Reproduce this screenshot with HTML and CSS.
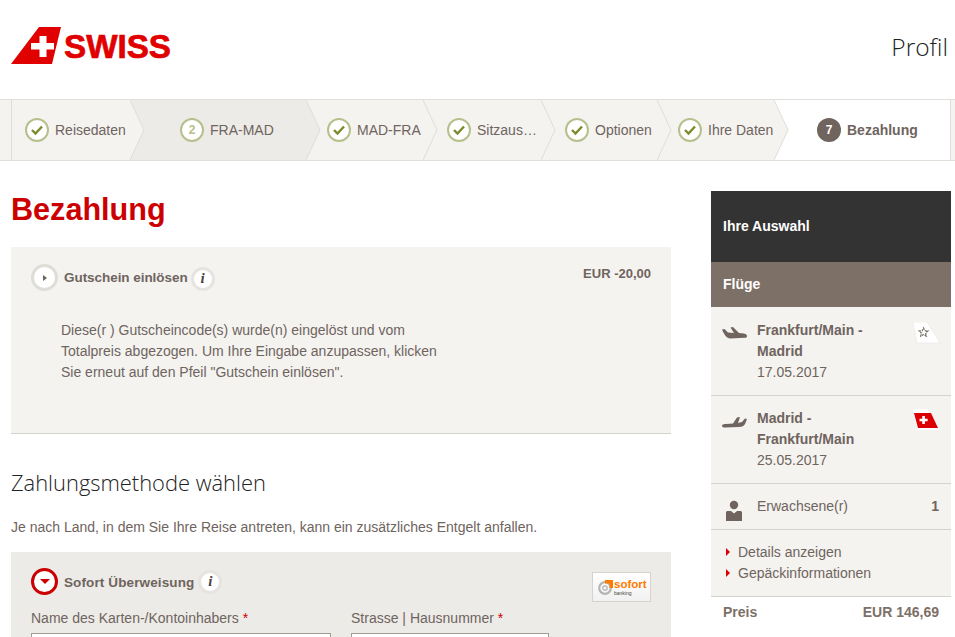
FILE: index.html
```html
<!DOCTYPE html>
<html lang="de">
<head>
<meta charset="utf-8">
<title>Bezahlung</title>
<link rel="stylesheet" href="styles.css">
</head>
<body>
<header class="top">
  <svg class="logo" width="162" height="38" viewBox="0 0 162 38">
    <polygon points="0,37 28,0 50,0 41,37" fill="#e00000"/>
    <path d="M28.500 9h7v7h7.500v6.500h-7.500v7.500h-7v-7.500h-8.500v-6.500h8.500z" fill="#fff"/>
    <text x="53" y="30.500" class="logo-text" textLength="107" lengthAdjust="spacingAndGlyphs">SWISS</text>
  </svg>
  <span class="profil">Profil</span>
</header>

<nav class="steps">
  <div class="step-lead"></div>
  <div class="step s1">
    <span class="dot done"><svg width="14" height="12" viewBox="0 0 14 12"><path d="M2 6l3.500 3.500L12 2.500" class="tick"/></svg></span>
    <span class="step-label">Reisedaten</span>
    <svg class="arrow" width="15" height="60" viewBox="0 0 15 60"><polygon points="0,0 14,30 0,60" class="a-light"/><polyline points="0,0 14,30 0,60" class="a-line"/></svg>
  </div>
  <div class="step s2 current-grey">
    <span class="dot num">2</span>
    <span class="step-label">FRA-MAD</span>
    <svg class="arrow" width="15" height="60" viewBox="0 0 15 60"><polygon points="0,0 14,30 0,60" class="a-grey"/><polyline points="0,0 14,30 0,60" class="a-line"/></svg>
  </div>
  <div class="step s3">
    <span class="dot done"><svg width="14" height="12" viewBox="0 0 14 12"><path d="M2 6l3.500 3.500L12 2.500" class="tick"/></svg></span>
    <span class="step-label">MAD-FRA</span>
    <svg class="arrow" width="15" height="60" viewBox="0 0 15 60"><polygon points="0,0 14,30 0,60" class="a-light"/><polyline points="0,0 14,30 0,60" class="a-line"/></svg>
  </div>
  <div class="step s4">
    <span class="dot done"><svg width="14" height="12" viewBox="0 0 14 12"><path d="M2 6l3.500 3.500L12 2.500" class="tick"/></svg></span>
    <span class="step-label">Sitzaus…</span>
    <svg class="arrow" width="15" height="60" viewBox="0 0 15 60"><polygon points="0,0 14,30 0,60" class="a-light"/><polyline points="0,0 14,30 0,60" class="a-line"/></svg>
  </div>
  <div class="step s5">
    <span class="dot done"><svg width="14" height="12" viewBox="0 0 14 12"><path d="M2 6l3.500 3.500L12 2.500" class="tick"/></svg></span>
    <span class="step-label">Optionen</span>
    <svg class="arrow" width="15" height="60" viewBox="0 0 15 60"><polygon points="0,0 14,30 0,60" class="a-light"/><polyline points="0,0 14,30 0,60" class="a-line"/></svg>
  </div>
  <div class="step s6">
    <span class="dot done"><svg width="14" height="12" viewBox="0 0 14 12"><path d="M2 6l3.500 3.500L12 2.500" class="tick"/></svg></span>
    <span class="step-label">Ihre Daten</span>
    <svg class="arrow" width="15" height="60" viewBox="0 0 15 60"><polygon points="0,0 14,30 0,60" class="a-light"/><polyline points="0,0 14,30 0,60" class="a-line"/></svg>
  </div>
  <div class="step s7 active">
    <span class="dot now">7</span>
    <span class="step-label">Bezahlung</span>
  </div>
  <div class="step-tail"></div>
</nav>

<div class="page">
  <main class="main">
    <h1 class="title">Bezahlung</h1>

    <section class="voucher">
      <div class="panel-head">
        <span class="toggle"><svg width="8" height="8" viewBox="0 0 8 8"><polygon points="2,1 6,4 2,7" fill="#6f645e"/></svg></span>
        <span class="panel-title">Gutschein einlösen</span>
        <span class="info">i</span>
        <span class="amount">EUR -20,00</span>
      </div>
      <p class="voucher-text">Diese(r ) Gutscheincode(s) wurde(n) eingelöst und vom<br>Totalpreis abgezogen. Um Ihre Eingabe anzupassen, klicken<br>Sie erneut auf den Pfeil "Gutschein einlösen".</p>
    </section>

    <h2 class="subtitle">Zahlungsmethode wählen</h2>
    <p class="note">Je nach Land, in dem Sie Ihre Reise antreten, kann ein zusätzliches Entgelt anfallen.</p>

    <section class="method">
      <div class="panel-head method-head">
        <span class="toggle open"><svg width="10" height="6" viewBox="0 0 10 6"><polygon points="0,0 10,0 5,5" fill="#cc0000"/></svg></span>
        <span class="panel-title">Sofort Überweisung</span>
        <span class="info info-flat">i</span>
        <span class="sofort">
          <svg width="16" height="16" viewBox="0 0 16 16" class="sofort-mark">
            <circle cx="7" cy="9" r="5.800" fill="none" stroke="#b5b5b5" stroke-width="2.200"/>
            <circle cx="7" cy="9" r="2.200" fill="none" stroke="#b5b5b5" stroke-width="1.300"/>
            <path d="M7 1h8v8h-3.500V4.500H7z" fill="#ff7a00"/>
          </svg>
          <span class="sofort-words"><span class="sofort-name">sofort</span><span class="sofort-sub">banking</span></span>
        </span>
      </div>
      <div class="fields">
        <div class="field f-name">
          <label class="field-label">Name des Karten-/Kontoinhabers <span class="req">*</span></label>
          <div class="input"></div>
        </div>
        <div class="field f-street">
          <label class="field-label">Strasse | Hausnummer <span class="req">*</span></label>
          <div class="input"></div>
        </div>
      </div>
    </section>
  </main>

  <aside class="side">
    <div class="side-head">Ihre Auswahl</div>
    <div class="side-sub">Flüge</div>
    <div class="flight">
      <svg class="plane" width="26" height="14" viewBox="0 0 26 14"><path d="M0 3.500L2.500 3l3.500 3.500 6 .4L8.500 1.500 11 1l6 6 5 .5C24 8 25 9 25 10c0 1-.5 1.800-2 1.800L8 12.500C5 12.500 2 8.500 0 3.500z" fill="#6f645e"/></svg>
      <div class="flight-text">
        <div class="route">Frankfurt/Main -<br>Madrid</div>
        <div class="date">17.05.2017</div>
      </div>
      <svg class="tail" width="28" height="22" viewBox="0 0 28 22">
        <polygon points="0,0 14,0 27,21 4,21" fill="#fff" stroke="#e4e2dd" stroke-width=".5"/>
        <path d="M10.500 6l1.300 2.700 3 .3-2.200 2 .7 3-2.800-1.500-2.700 1.500.6-3-2.200-2 3-.3z" fill="none" stroke="#77706a" stroke-width="1.300" stroke-dasharray="2 1"/>
      </svg>
    </div>
    <div class="flight flight-back">
      <svg class="plane" width="26" height="14" viewBox="0 0 26 14"><path d="M0 10.500C0 9.500 2 9 4 9l7-.5L15 2.500 18 2l-2 6 4-1 3-3.500 2 .5-2 5c-1 2-3 3-6 3l-14 .5C1 12.500 0 12 0 10.500z" fill="#6f645e"/></svg>
      <div class="flight-text">
        <div class="route">Madrid -<br>Frankfurt/Main</div>
        <div class="date">25.05.2017</div>
      </div>
      <svg class="tail" width="28" height="22" viewBox="0 0 28 22">
        <polygon points="0,0 14,0 27,21 4,21" fill="#fff"/>
        <polygon points="1,4 18,4 25,19 5,19" fill="#dd0000"/>
        <path d="M9.300 7h2.600v2.700h2.700v2.600h-2.700V15H9.300v-2.700H6.500V9.700h2.800z" fill="#fff"/>
      </svg>
    </div>
    <div class="pax">
      <svg class="person" width="18" height="22" viewBox="0 0 18 22"><circle cx="9" cy="5" r="4.200" fill="#6f645e"/><path d="M1 12.500c0-1 .8-1.500 1.800-1.500H6l3 2.500 3-2.500h3.200c1 0 1.800.5 1.800 1.500V21H1z" fill="#6f645e"/></svg>
      <span class="pax-label">Erwachsene(r)</span>
      <span class="pax-count">1</span>
    </div>
    <ul class="links">
      <li class="link">Details anzeigen</li>
      <li class="link">Gepäckinformationen</li>
    </ul>
    <div class="price"><span>Preis</span><span>EUR 146,69</span></div>
  </aside>
</div>
</body>
</html>
```
FILE: styles.css
```css
* { box-sizing: border-box; }
html, body { margin: 0; padding: 0; height: 637px; overflow: hidden; background: #fff; }
body { font-family: "Liberation Sans", Arial, sans-serif; font-size: 14px; color: #6f645e; }

.top { height: 99px; padding: 27px 7px 0 11px; display: flex; justify-content: space-between; align-items: flex-start; }
.logo { display: block; }
.logo-text { font-family: "Liberation Sans", sans-serif; font-weight: 700; font-size: 33px; fill: #e00000; stroke: #e00000; stroke-width: .7px; }
.profil { font-family: "Open Sans", sans-serif; font-weight: 300; font-size: 24.500px; line-height: 40px; color: #222; }

.steps { display: flex; height: 62px; border-top: 1px solid #e0dfda; border-bottom: 1px solid #e0dfda; background: #f4f3f0; }
.step-lead { width: 12px; border-right: 1px solid #dfddd8; }
.step-tail { flex: 1; border-left: 1px solid #dfddd8; }
.step { position: relative; display: flex; align-items: center; gap: 6px; flex: none; white-space: nowrap; }
.s1 { width: 118px; padding-left: 13px; z-index: 7; }
.s2 { width: 176px; padding-left: 50px; z-index: 6; background: #ecebe7; }
.s3 { width: 117px; padding-left: 21px; z-index: 5; }
.s4 { width: 118px; padding-left: 24px; z-index: 4; }
.s5 { width: 116px; padding-left: 24px; z-index: 3; }
.s6 { width: 117px; padding-left: 21px; z-index: 2; }
.s7 { width: 176px; padding-left: 43px; z-index: 1; background: #fff; }
.arrow { position: absolute; left: 100%; top: 0; }
.a-light { fill: #f4f3f0; }
.a-grey { fill: #ecebe7; }
.a-line { fill: none; stroke: #dfddd8; stroke-width: 1; }
.dot { width: 24px; height: 24px; border-radius: 50%; flex: none; display: flex; align-items: center; justify-content: center; }
.done { background: #fff; border: 2.500px solid #b6c08c; }
.num { background: #fff; border: 2.500px solid #b6c08c; color: #b6c08c; font-size: 12px; font-weight: 700; }
.now { background: #6f645e; color: #fff; font-size: 12px; font-weight: 700; }
.tick { fill: none; stroke: #7f8a2c; stroke-width: 2.400; }
.active .step-label { font-weight: 700; }

.page { display: flex; padding: 30px 4px 0 11px; gap: 40px; }
.main { width: 660px; flex: none; }
.side { width: 240px; flex: none; }

.title { margin: 0; height: 56px; font-size: 30.600px; line-height: 36px; font-weight: 700; color: #cc0000; }

.voucher { height: 187px; background: #f4f3f0; border-bottom: 1px solid #d5d3cd; padding: 17px 20px 0; }
.panel-head { position: relative; display: flex; align-items: center; height: 27px; }
.toggle { width: 27px; height: 27px; flex: none; border-radius: 50%; background: #fff; border: 3px solid #dfddd8; display: flex; align-items: center; justify-content: center; margin-right: 6px; }
.toggle.open { border-color: #cc0000; }
.panel-title { font-weight: 700; font-size: 13.500px; margin-top: -1px; letter-spacing: -.05px; }
.method-head .panel-title { margin-top: 1px; letter-spacing: .12px; }
.info { width: 24px; height: 24px; flex: none; border-radius: 50%; background: #fff; border: 3px solid #e6e4e0; margin-left: 3px; margin-top: 2px; display: flex; align-items: center; justify-content: center; font-family: "Liberation Serif", serif; font-style: italic; font-weight: 700; font-size: 15px; color: #4a423e; }
.info-flat { margin-left: 4px; margin-top: 0; }
.amount { margin-left: auto; font-size: 13px; font-weight: 700; align-self: flex-start; margin-top: 2px; }
.voucher-text { margin: 29px 0 0 30px; line-height: 21px; }

.subtitle { margin: 0; padding-top: 33px; font-family: "Open Sans", sans-serif; font-weight: 300; font-size: 21.900px; line-height: 32px; color: #222; }
.note { margin: 18px 0 0; line-height: 20px; height: 35px; }

.method { background: #ecebe7; height: 85px; overflow: hidden; padding: 16px 20px 0; }
.method-head { height: 27px; }
.sofort { position: absolute; right: 0; top: 4px; width: 59px; height: 30px; border: 1px solid #d5d3cb; background: linear-gradient(#fff, #f1f1f1); display: flex; align-items: center; padding-left: 5px; }
.sofort-mark { flex: none; }
.sofort-words { display: flex; flex-direction: column; }
.sofort-name { color: #ff7a00; font-weight: 700; font-size: 11.500px; line-height: 11px; }
.sofort-sub { color: #444; font-size: 5px; line-height: 6px; }

.fields { display: flex; gap: 20px; margin-top: 15px; }
.field { flex: none; }
.f-name { width: 300px; }
.f-street { width: 198px; }
.field-label { display: block; line-height: 16px; margin-bottom: 7px; }
.req { color: #cc0000; }
.input { height: 30px; background: #fff; border: 1px solid #a39c94; }

.side-head { height: 71px; background: #333; color: #fff; font-weight: 700; padding: 0 12px 2px; display: flex; align-items: center; }
.side-sub { height: 45px; background: #7d7067; color: #fff; font-weight: 700; padding: 0 12px 2px; display: flex; align-items: center; }
.flight { display: flex; height: 89px; background: #f4f3f0; border-bottom: 1px solid #d5d3cd; padding: 13px 10px 0 11px; }
.flight-back { height: 88px; padding-top: 12px; }
.plane { flex: none; margin-top: 6px; }
.flight-back .plane { margin-top: 7px; }
.flight-text { margin-left: 9px; line-height: 21px; flex: 1; }
.route { font-weight: 700; }
.tail { flex: none; margin-top: 2px; }
.flight-back .tail { margin-top: 1px; }
.pax { display: flex; align-items: center; height: 46px; background: #f4f3f0; border-bottom: 1px solid #d5d3cd; padding: 0 12px 0 14px; }
.person { flex: none; margin-top: 8px; }
.pax-label { margin-left: 14px; margin-top: -2px; }
.pax-count { margin-left: auto; font-weight: 700; margin-top: -2px; }
.links { list-style: none; margin: 0; padding: 12px 0 0 27px; height: 67px; background: #f4f3f0; border-bottom: 1px solid #d5d3cd; }
.link { position: relative; line-height: 21px; }
.link::before { content: ""; position: absolute; left: -12px; top: 6px; border-left: 4px solid #dd0000; border-top: 4px solid transparent; border-bottom: 4px solid transparent; }
.price { display: flex; justify-content: space-between; padding: 5px 12px 0; font-weight: 700; color: #7d7067; line-height: 20px; }
```
